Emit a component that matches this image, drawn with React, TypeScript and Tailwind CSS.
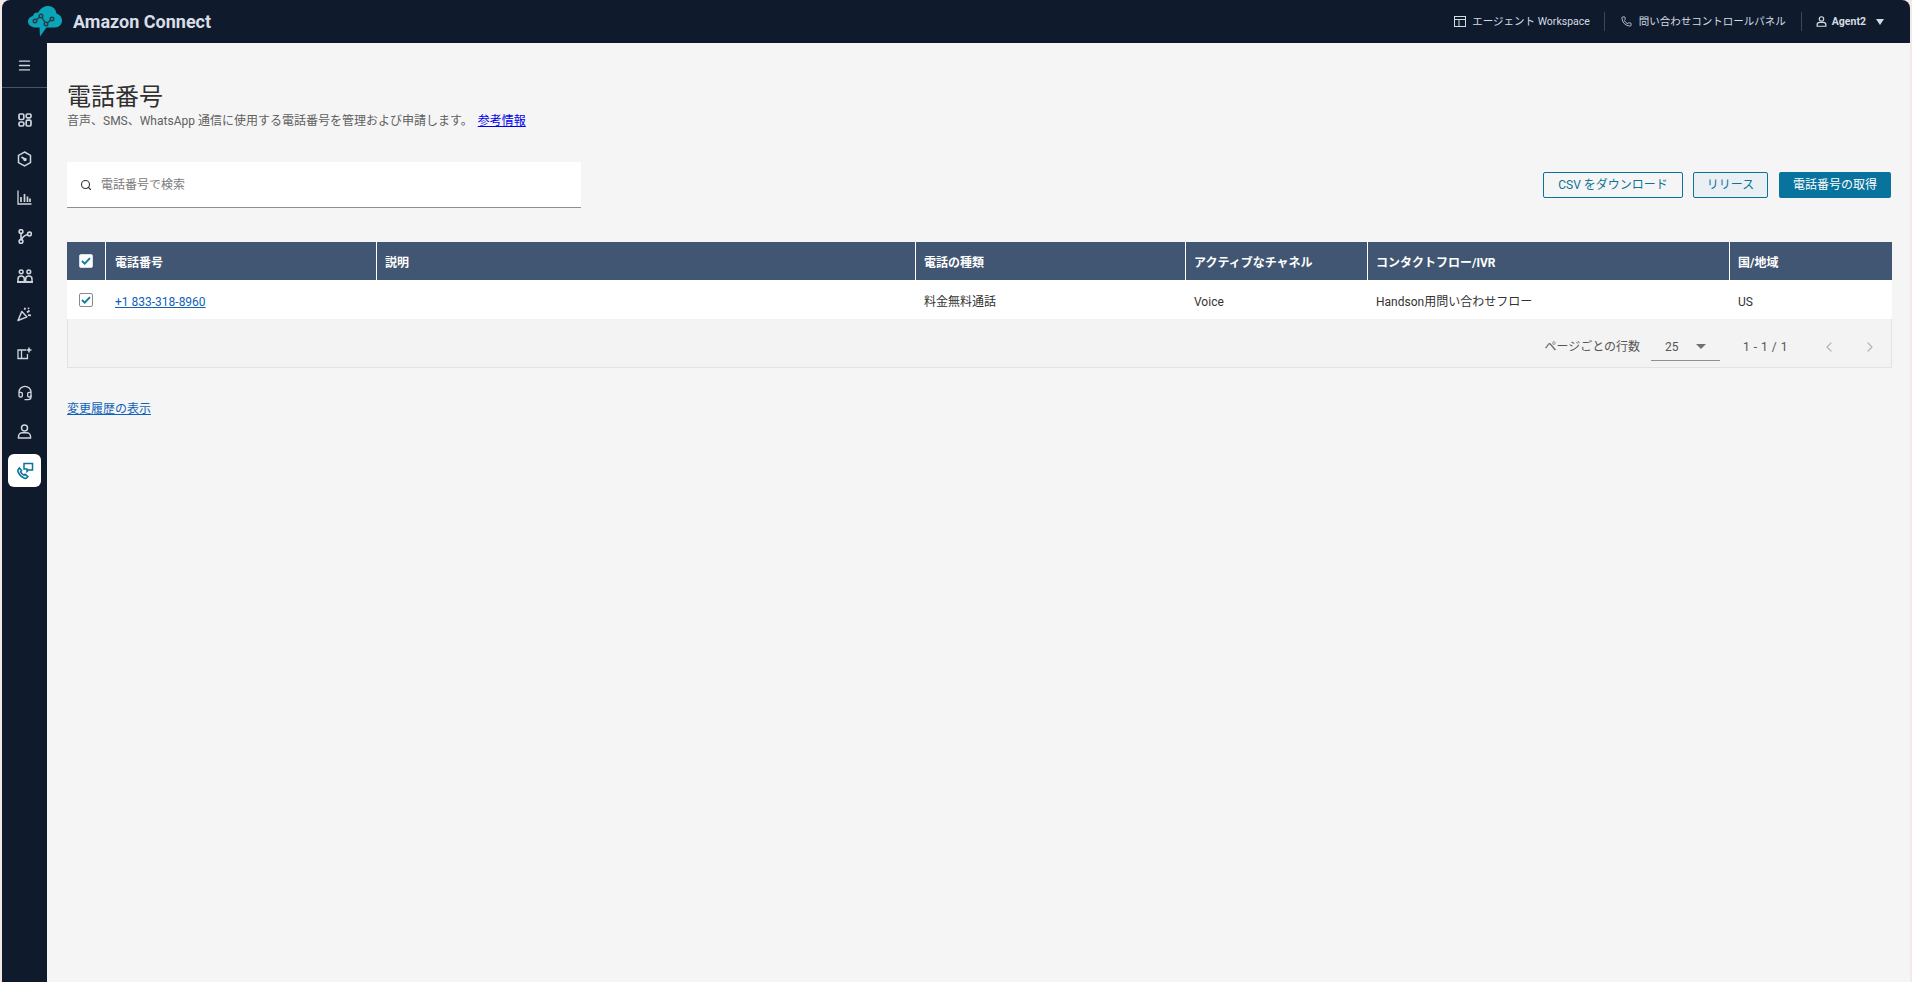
import { ChevronLeft, ChevronRight, Headset, Menu, Phone, Search } from "lucide-react"

const font = "font-['Roboto','Noto_Sans_CJK_JP',sans-serif]"

const Logo = () => (
  <svg width="34" height="31" viewBox="0 0 34 31" className="shrink-0">
    <path
      d="M8 21.500C3.500 21.500 0 19 0 15.500 0 12.500 2.500 10.500 5 10c.5-3 3-4 5.500-3.500C12 2.500 16 0 20 0c4.500 0 8 3 8.500 7.500 3 1 5.500 3.500 5.500 7 0 4-3 7-7 7h-8.500L12 30.500l-.5-9z"
      fill="#0aa5b8"
    />
    <g fill="none" stroke="#2a3a48" strokeWidth="1.400">
      <path d="M7 15l6-5 5 8 6-5" />
      <circle cx="7" cy="15" r="1.800" fill="#0aa5b8" />
      <circle cx="13" cy="10" r="1.800" fill="#0aa5b8" />
      <circle cx="18" cy="18" r="1.800" fill="#0aa5b8" />
      <circle cx="24" cy="13" r="1.800" fill="#0aa5b8" />
    </g>
  </svg>
)

const DashIcon = () => (
  <svg width="14" height="14" viewBox="0 0 14 14" fill="none" stroke="currentColor" strokeWidth="1.700">
    <rect x="1" y="1" width="4.800" height="5.500" rx="1.200" />
    <rect x="8.200" y="1" width="4.800" height="3.800" rx="1.200" />
    <rect x="1" y="9" width="4.800" height="4" rx="1.600" />
    <rect x="8.200" y="7.200" width="4.800" height="5.800" rx="1.200" />
  </svg>
)

const HexIcon = () => (
  <svg width="15" height="16" viewBox="0 0 15 16" fill="none" stroke="currentColor" strokeWidth="1.500">
    <path d="M7.500 1l6 3.400v7.200l-6 3.400-6-3.400V4.400z" />
    <path d="M4.500 6l3.300 2.300" strokeWidth="1.800" />
    <circle cx="8" cy="8.500" r="1" fill="currentColor" />
  </svg>
)

const ChartIcon = () => (
  <svg width="15" height="15" viewBox="0 0 15 15" fill="none" stroke="currentColor" strokeWidth="1.300">
    <path d="M1 .5v13.500h13.500" />
    <path d="M4 12V7M7.500 12V4M10.500 12V6.500M13 12V8.500" strokeWidth="1.700" />
  </svg>
)

const BranchIcon = () => (
  <svg width="14" height="15" viewBox="0 0 14 15" fill="none" stroke="currentColor" strokeWidth="1.600">
    <circle cx="3" cy="2.500" r="1.900" />
    <circle cx="3" cy="12.500" r="1.900" />
    <circle cx="11.500" cy="5" r="1.900" />
    <path d="M3 4.400v6.200M9.700 5.600C7 6.300 4.500 7.500 3.700 10.700" />
  </svg>
)

const GroupIcon = () => (
  <svg width="16" height="14" viewBox="0 0 16 14" fill="none" stroke="currentColor" strokeWidth="1.500">
    <circle cx="4.200" cy="2.800" r="1.900" />
    <circle cx="11.800" cy="2.800" r="1.900" />
    <path d="M1 13v-3c0-1.800 1.300-3 3.200-3S7.300 8.200 7.300 10v3z" />
    <path d="M8.700 13v-3c0-1.800 1.200-3 3.100-3S15 8.200 15 10v3z" />
    <path d="M0 13h16" strokeWidth="1.800" />
  </svg>
)

const PopperIcon = () => (
  <svg width="15" height="15" viewBox="0 0 15 15" fill="none" stroke="currentColor" strokeWidth="1.500">
    <path d="M4.800 4.500L1 13.500l9-3.600z" strokeLinejoin="round" />
    <path d="M7.500 2.800l.8-2M10 5.500l2.500-2M11 8.200l3 .2" strokeWidth="1.700" />
    <circle cx="11.500" cy="1.300" r=".9" fill="currentColor" stroke="none" />
  </svg>
)

const AddBoxIcon = () => (
  <svg width="15" height="13" viewBox="0 0 15 13" fill="none" stroke="currentColor" strokeWidth="1.300">
    <path d="M9 3H1v8.500h9.500V7" />
    <path d="M4.500 3v8.500" />
    <path d="M12 .5v5M9.500 3h5" strokeWidth="1.600" />
  </svg>
)

const UserIcon = ({ size = 15, stroke = 1.500 }: { size?: number; stroke?: number }) => (
  <svg width={size} height={size} viewBox="0 0 15 15" fill="none" stroke="currentColor" strokeWidth={stroke}>
    <circle cx="7.500" cy="4" r="3" />
    <path d="M1.500 14v-1.500c0-2.500 2-3.700 3.700-3.700h4.600c1.700 0 3.700 1.200 3.700 3.700V14z" />
  </svg>
)

const PhoneBoxIcon = () => (
  <svg width="18" height="18" viewBox="0 0 18 18" fill="none" stroke="#08739c" strokeWidth="1.600">
    <path d="M2.500 7c-.8.800-1 1.600-.5 2.800 1.200 3 3.200 5 6 6.300 1.200.5 2 .3 2.900-.5l.9-1-2.700-2.300-1.200.8c-1.500-.6-2.700-1.800-3.300-3.400l.9-1.200L3.400 6z" />
    <path d="M8 7V1.500h8.500V8H12.500l-1.500 1.500V7z" strokeWidth="1.500" />
  </svg>
)

const WorkspaceIcon = () => (
  <svg width="12" height="11" viewBox="0 0 12 11" fill="none" stroke="currentColor" strokeWidth="1">
    <rect x=".5" y=".5" width="11" height="10" />
    <path d="M.5 3.500h11M5 3.500v7" />
  </svg>
)

const CheckBox = ({ outlined }: { outlined?: boolean }) => (
  <span
    className={`flex h-[14px] w-[14px] items-center justify-center rounded-[2px] bg-white ${outlined ? "border border-[#8a8a8a]" : "border border-[#d8dde2]"}`}
  >
    <svg width="10" height="8" viewBox="0 0 10 8" fill="none" stroke="#0d7ea3" strokeWidth="1.900">
      <path d="M1 4l2.700 2.600L9 1.200" />
    </svg>
  </span>
)

const navIcons = [
  <DashIcon key="dash" />,
  <HexIcon key="hex" />,
  <ChartIcon key="chart" />,
  <BranchIcon key="branch" />,
  <GroupIcon key="group" />,
  <PopperIcon key="party" />,
  <AddBoxIcon key="add" />,
  <Headset key="headset" size={16} strokeWidth={2} />,
  <UserIcon key="user" />,
]

const columns = ["電話番号", "説明", "電話の種類", "アクティブなチャネル", "コンタクトフロー/IVR", "国/地域"]
const cells = ["料金無料通話", "Voice", "Handson用問い合わせフロー", "US"]

export default function App() {
  return (
    <div className={`flex h-[982px] w-[1912px] flex-col overflow-hidden bg-[#f3e9e9] pl-[2px] pr-[2px] ${font}`}>
      <header className="flex h-[43px] shrink-0 items-center rounded-t-[8px] bg-[#0f1b2d] pr-[26px] text-[#d5dbe3]">
        <div className="ml-[26px] flex items-center gap-[11px]">
          <Logo />
          <span className="pb-px text-[18px] font-bold text-[#d9dee6]">Amazon Connect</span>
        </div>
        <div className="ml-auto flex items-center text-[10.500px]">
          <WorkspaceIcon />
          <span className="ml-[6px]">エージェント Workspace</span>
          <span className="mx-[14px] h-[19px] w-px bg-[#3c4858]" />
          <Phone size={11} strokeWidth={1.800} className="ml-[2px]" />
          <span className="ml-[7px]">問い合わせコントロールパネル</span>
          <span className="ml-[15px] mr-[14px] h-[19px] w-px bg-[#3c4858]" />
          <UserIcon size={11} stroke={1.600} />
          <span className="ml-[5px] font-bold">Agent2</span>
          <span className="ml-[10px] h-0 w-0 border-x-[4px] border-t-[6px] border-x-transparent border-t-[#d5dbe3]" />
        </div>
      </header>

      <div className="flex min-h-0 flex-1">
        <nav className="flex w-[45px] shrink-0 flex-col items-center bg-[#0f1b2d] text-[#cfd5dd]">
          <div className="flex h-[45px] w-full items-center justify-center border-b border-[#4a5563]">
            <Menu size={15} strokeWidth={2.200} />
          </div>
          <div className="mt-[12px] flex flex-col items-center">
            {navIcons.map((icon) => (
              <div key={icon.key} className="flex h-[39px] w-[33px] items-center justify-center">
                {icon}
              </div>
            ))}
            <div className="mt-[3px] flex h-[33px] w-[33px] items-center justify-center rounded-[6px] bg-white">
              <PhoneBoxIcon />
            </div>
          </div>
        </nav>

        <main className="min-w-0 flex-1 bg-[#f5f5f5] pl-[20px] pr-[18px] pt-[39px]">
          <h1 className="text-[24px] leading-[31px] text-[#2f2f2f]">電話番号</h1>
          <p className="text-[12px] leading-[16px] text-[#5f5f5f]">
            音声、SMS、WhatsApp 通信に使用する電話番号を管理および申請します。
            <a className="ml-[5px] text-[#0000ee] underline">参考情報</a>
          </p>

          <div className="mt-[33px] flex items-center justify-between pr-px">
            <div className="flex h-[46px] w-[514px] items-center border-b border-[#8f8f8f] bg-white pl-[13px] text-[12px] text-[#7a7a7a]">
              <Search size={12} strokeWidth={2.200} className="text-[#333333]" />
              <span className="ml-[9px]">電話番号で検索</span>
            </div>
            <div className="flex items-center text-[12px]">
              <button className="flex h-[26px] w-[140px] items-center justify-center rounded-[2px] border border-[#0a7399] text-[#0a7399]">
                CSV をダウンロード
              </button>
              <button className="ml-[10px] flex h-[26px] w-[75px] items-center justify-center rounded-[2px] border border-[#0a7399] bg-[#e9eff3] text-[#0a7399]">
                リリース
              </button>
              <button className="ml-[11px] flex h-[26px] w-[112px] items-center justify-center rounded-[2px] bg-[#08739c] text-white">
                電話番号の取得
              </button>
            </div>
          </div>

          <div className="mt-[34px] w-[1825px] text-[12px]">
            <div className="grid h-[38px] grid-cols-[38px_271px_539px_270px_182px_362px_163px] bg-[#415672] font-bold text-white">
              <div className="flex items-center justify-center">
                <CheckBox />
              </div>
              {columns.map((c, i) => (
                <div key={c} className={`flex items-center border-l border-white pt-[4px] ${i === 0 ? "pl-[9px]" : "pl-[8px]"}`}>
                  {c}
                </div>
              ))}
            </div>
            <div className="grid h-[39px] grid-cols-[38px_271px_539px_270px_182px_362px_163px] bg-white text-[#333333]">
              <div className="flex items-center justify-center">
                <CheckBox outlined />
              </div>
              <div className="flex items-center pl-[10px] pt-[5px]">
                <a className="text-[#0f62b8] underline">+1 833-318-8960</a>
              </div>
              <div />
              {cells.map((c) => (
                <div key={c} className="flex items-center pl-[9px] pt-[5px]">
                  {c}
                </div>
              ))}
            </div>
            <div className="flex h-[49px] items-center border-x border-b border-[#e3e3e3] bg-[#f3f3f3] pr-[13px] pt-[8px] text-[#555555]">
              <span className="ml-auto">ページごとの行数</span>
              <div className="ml-[11px] flex h-[27px] w-[69px] items-center border-b border-[#8f8f8f] pl-[14px]">
                <span>25</span>
                <span className="ml-[17px] h-0 w-0 border-x-[5px] border-t-[5px] border-x-transparent border-t-[#707070]" />
              </div>
              <span className="ml-[23px] tracking-[0.5px]">1 - 1 / 1</span>
              <ChevronLeft size={16} strokeWidth={1.800} className="ml-[33px] text-[#b5b5b5]" />
              <ChevronRight size={16} strokeWidth={1.800} className="ml-[25px] text-[#b5b5b5]" />
            </div>
          </div>

          <a className="mt-[33px] block w-fit text-[12px] leading-[16px] text-[#0f62b8] underline">変更履歴の表示</a>
        </main>
      </div>
    </div>
  )
}
